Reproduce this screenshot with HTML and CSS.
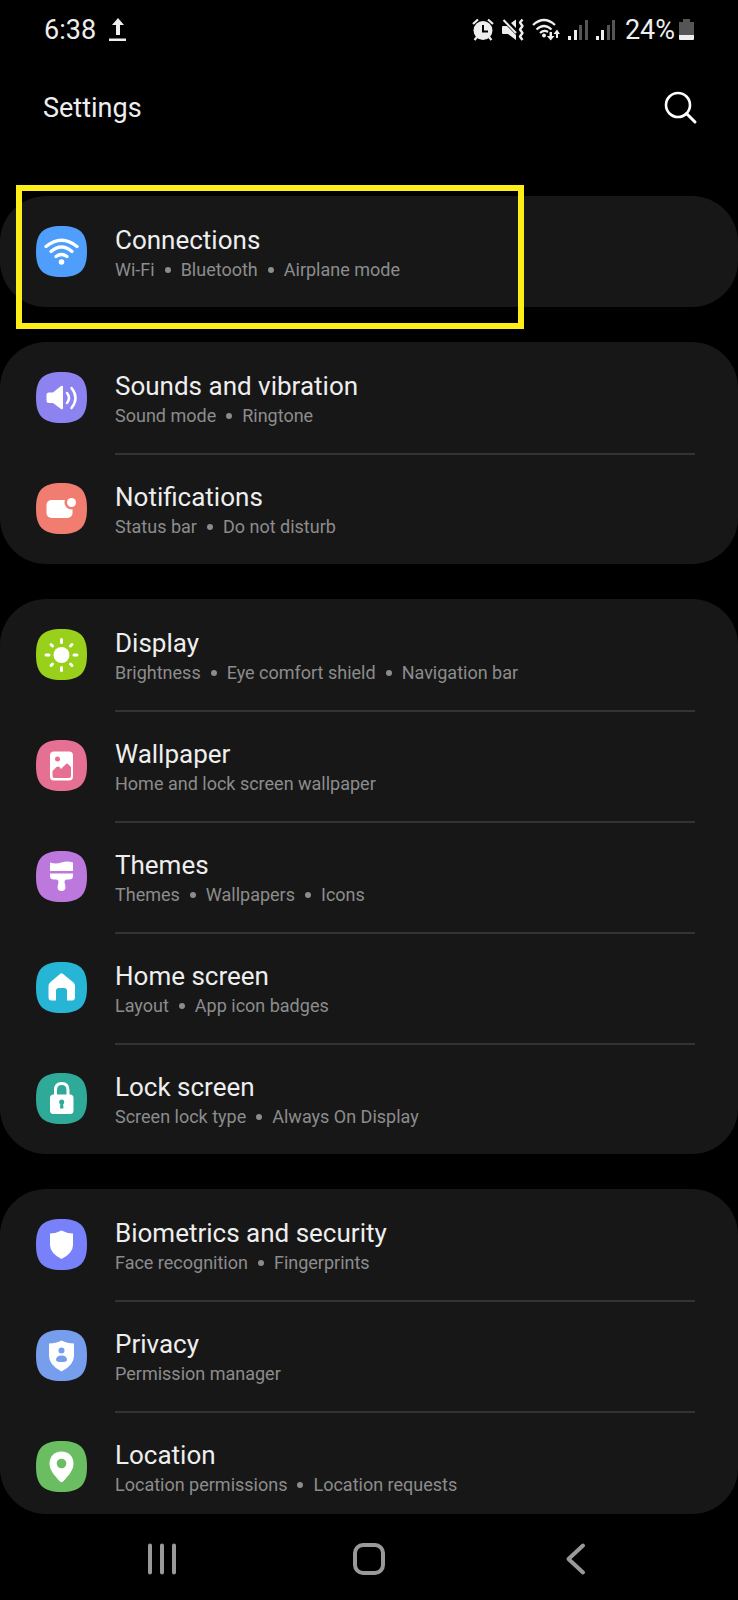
FILE: index.html
```html
<!DOCTYPE html>
<html lang="en">
<head>
    <meta charset="UTF-8">
    <meta name="viewport" content="width=device-width, initial-scale=1.0">
    <title>Settings</title>
    <link rel="stylesheet" href="styles.css">
</head>
<body>
    <div class="status-bar">
        <span class="clock">6:38</span>
        <svg class="upload" width="18" height="24" viewBox="0 0 18 24"><path d="M9 0L15 7H11V17H7V7H3Z"/><path d="M0 20.500H17V23H0Z"/></svg>
        <div class="status-icons">
            <svg width="22" height="24" viewBox="0 0 22 24">
                <path d="M1 6L6 1.500M21 6L16 1.500M5 19L2.500 22M17 19L19.500 22" fill="none" stroke="#eee" stroke-width="2.200"/>
                <circle cx="11" cy="12.500" r="9.500"/>
                <path d="M11 7V13.500H16" fill="none" stroke="#000" stroke-width="2"/>
            </svg>
            <svg width="22" height="24" viewBox="0 0 22 24">
                <path d="M0 9Q0 8 1 8H5L14 17V22L6 16H1Q0 16 0 15ZM9 5L14 1.500V10Z"/>
                <path d="M1.500 2L14 15" stroke="#eee" stroke-width="2"/>
                <path d="M20.500 1.500L18 4.500L20.500 8L18 11.500L20.500 15L18 18.500L20.500 22" fill="none" stroke="#eee" stroke-width="2.400" stroke-linejoin="round"/>
            </svg>
            <svg width="28" height="24" viewBox="0 0 28 24">
                <path d="M1 7Q12 -3 23 7M4.500 11.500Q12 4.500 19.500 11.500M8 15Q12 11.500 16 14" fill="none" stroke="#eee" stroke-width="2.200"/>
                <circle cx="12" cy="17.500" r="2"/>
                <path d="M17.500 14H20V18H22.500L18.700 22.500L15 18H17.500ZM24 20V16H21.500L25 11.500L28 16H26V20Z"/>
            </svg>
            <svg width="20" height="24" viewBox="0 0 20 24"><path d="M0 18H3V22H0ZM6 12H9V22H6Z"/><path class="dim" d="M11 7H14V22H11ZM17 2H20V22H17Z"/></svg>
            <svg width="20" height="24" viewBox="0 0 20 24"><path d="M0 18H3V22H0ZM5 12H8V22H5Z"/><path class="dim" d="M11 7H14V22H11ZM16 2H19V22H16Z"/></svg>
        </div>
        <span class="battery-level">24%</span>
        <svg class="battery" width="15" height="24" viewBox="0 0 15 24"><path class="dim" d="M4 1H11V4H15V17H0V4H4Z"/><path d="M0 17H15V21Q15 22 14 22H1Q0 22 0 21Z"/></svg>
    </div>

    <header class="header">
        <h1>Settings</h1>
        <button class="search" aria-label="Search">
            <svg width="34" height="34" viewBox="0 0 34 34"><circle cx="14" cy="14" r="12" fill="none" stroke="#fff" stroke-width="2.600"/><path d="M22.500 22.500L31 31" stroke="#fff" stroke-width="3" stroke-linecap="round"/></svg>
        </button>
    </header>

    <!-- outline shared by every icon tile -->
    <svg width="0" height="0" class="defs"><defs><path id="tile" d="M25.500 0C44 0 51 7 51 25.500S44 51 25.500 51 0 44 0 25.500 7 0 25.500 0Z"/></defs></svg>

    <main>
        <section class="card">
            <a class="row" href="#">
                <svg class="icon blue" viewBox="0 0 51 51"><use href="#tile"/><path class="line" d="M10 20.500Q25.500 8 41 20.500M15 25.500Q25.500 16.500 36 25.500M20 30.500Q25.500 26.500 31 30.500" stroke-width="3.200"/><circle class="w" cx="25.500" cy="36" r="2.800"/></svg>
                <span class="text"><span class="name">Connections</span><span class="sub">Wi-Fi<i></i>Bluetooth<i></i>Airplane mode</span></span>
            </a>
            <div class="highlight"></div>
        </section>

        <section class="card">
            <a class="row" href="#">
                <svg class="icon violet" viewBox="0 0 51 51"><use href="#tile"/><path class="w" d="M10.500 23Q10.500 20.500 13 20.500H17L25 14Q27 13 27 15V36Q27 38 25 37L17 31H13Q10.500 31 10.500 28.500Z"/><path class="line" d="M31 21Q35 26 31 31M35.500 16Q43.500 26 35.500 36" stroke-width="2.500"/></svg>
                <span class="text"><span class="name">Sounds and vibration</span><span class="sub">Sound mode<i></i>Ringtone</span></span>
            </a>
            <a class="row" href="#">
                <svg class="icon coral" viewBox="0 0 51 51"><use href="#tile"/><rect class="w" x="10.500" y="17" width="26" height="18" rx="5"/><circle cx="35.500" cy="19.500" r="7"/><circle class="w" cx="35.500" cy="19.500" r="4.500"/></svg>
                <span class="text"><span class="name">Notifications</span><span class="sub">Status bar<i></i>Do not disturb</span></span>
            </a>
        </section>

        <section class="card">
            <a class="row" href="#">
                <svg class="icon lime" viewBox="0 0 51 51"><use href="#tile"/><circle class="w" cx="25.500" cy="26" r="8"/><path class="line" d="M25.500 10.500V13.500M25.500 38.500V41.500M10 26H13M38 26H41M15 15.500L16.500 17M34.500 35L36 36.500M15 36.500L16.500 35M34.500 17L36 15.500" stroke-width="3"/></svg>
                <span class="text"><span class="name">Display</span><span class="sub">Brightness<i></i>Eye comfort shield<i></i>Navigation bar</span></span>
            </a>
            <a class="row" href="#">
                <svg class="icon pink" viewBox="0 0 51 51"><use href="#tile"/><rect class="w" x="14" y="11.500" width="23" height="29" rx="4"/><circle cx="21.500" cy="19" r="2.500"/><path d="M16.500 31L20.500 27Q22 26 23.500 27L25 29L30 24Q31 23 32 24L35 27V36Q35 38 33 38H18.500Q16.500 38 16.500 36Z"/></svg>
                <span class="text"><span class="name">Wallpaper</span><span class="sub">Home and lock screen wallpaper</span></span>
            </a>
            <a class="row" href="#">
                <svg class="icon purple" viewBox="0 0 51 51"><use href="#tile"/><path class="w" d="M14 11.500Q20 13.500 25.500 11.500T37 11.500V20H14ZM14 22.500H37V25Q37 28.500 33 28.500H31Q28.500 28.500 28.500 31L29.500 36Q29.500 40 25.500 40T21.500 36L22.500 31Q22.500 28.500 20 28.500H18Q14 28.500 14 25Z"/></svg>
                <span class="text"><span class="name">Themes</span><span class="sub">Themes<i></i>Wallpapers<i></i>Icons</span></span>
            </a>
            <a class="row" href="#">
                <svg class="icon cyan" viewBox="0 0 51 51"><use href="#tile"/><path class="w" d="M24 12Q25.500 10.500 27 12L37.500 20.500Q39 22 39 24V35Q39 38.500 36 38.500H31V29Q31 26 28 26H23Q20 26 20 29V38.500H15.500Q12.500 38.500 12.500 35V24Q12.500 22 14 20.500Z"/></svg>
                <span class="text"><span class="name">Home screen</span><span class="sub">Layout<i></i>App icon badges</span></span>
            </a>
            <a class="row" href="#">
                <svg class="icon teal" viewBox="0 0 51 51"><use href="#tile"/><rect class="w" x="14" y="21.500" width="23.500" height="19.500" rx="3.500"/><path class="line" d="M19.500 23V17Q19.500 10.500 25.700 10.500T32 17V23" stroke-width="3"/><circle cx="25.700" cy="29" r="2.500"/><path d="M24.500 29H27L27.500 35.500H24Z"/></svg>
                <span class="text"><span class="name">Lock screen</span><span class="sub">Screen lock type<i></i>Always On Display</span></span>
            </a>
        </section>

        <section class="card last">
            <a class="row" href="#">
                <svg class="icon indigo" viewBox="0 0 51 51"><use href="#tile"/><path class="w" d="M25.500 11.500Q31 14.500 37 14.500V26Q37 34 25.500 40Q14 34 14 26V14.500Q20 14.500 25.500 11.500Z"/></svg>
                <span class="text"><span class="name">Biometrics and security</span><span class="sub">Face recognition<i></i>Fingerprints</span></span>
            </a>
            <a class="row" href="#">
                <svg class="icon sky" viewBox="0 0 51 51"><use href="#tile"/><path class="w" d="M25.500 10.500Q31 13.500 38 13.500V26Q38 35 25.500 41.500Q13 35 13 26V13.500Q20 13.500 25.500 10.500Z"/><circle cx="25.500" cy="20.500" r="3"/><path d="M20 30Q20 25.500 25.500 25.500T31 30Q31 32 25.500 32T20 30Z"/></svg>
                <span class="text"><span class="name">Privacy</span><span class="sub">Permission manager</span></span>
            </a>
            <a class="row" href="#">
                <svg class="icon green" viewBox="0 0 51 51"><use href="#tile"/><path class="w" d="M25.500 10.500C33 10.500 37.500 16 37.500 22.500C37.500 29 33 34 27 40.500Q25.500 42 24 40.500C18 34 13.500 29 13.500 22.500C13.500 16 18 10.500 25.500 10.500Z"/><circle cx="25.500" cy="22.500" r="4.800"/></svg>
                <span class="text"><span class="name">Location</span><span class="sub">Location permissions<i></i>Location requests</span></span>
            </a>
        </section>
    </main>

    <nav class="nav-bar">
        <button aria-label="Recents"><svg width="32" height="34" viewBox="0 0 32 34"><path d="M4 3.500V30.500M16 3.500V30.500M28 3.500V30.500"/></svg></button>
        <button aria-label="Home"><svg width="34" height="34" viewBox="0 0 34 34"><rect x="3" y="3" width="28" height="28" rx="8"/></svg></button>
        <button aria-label="Back"><svg width="34" height="34" viewBox="0 0 34 34"><path d="M24 3.500L9.500 17L24 30.500"/></svg></button>
    </nav>
</body>
</html>
```
FILE: styles.css
```css
* {
    box-sizing: border-box;
}
body {
    margin: 0;
    background-color: #000;
    color: #eee;
    font-family: Roboto, "Noto Sans", sans-serif;
}
button {
    padding: 0;
    border: 0;
    background: none;
}
svg {
    display: block;
    flex-shrink: 0;
}
.defs {
    position: absolute;
}
.status-bar {
    display: flex;
    align-items: center;
    height: 60px;
    padding: 0 44px;
    font-size: 27px;
    fill: #eee;
}
.upload {
    margin-left: 13px;
}
.status-icons {
    display: flex;
    gap: 8px;
    margin-left: auto;
    margin-right: 9px;
}
.dim {
    fill: #555;
}
.battery {
    margin-left: 4px;
}
.header {
    display: flex;
    justify-content: space-between;
    align-items: center;
    height: 96px;
    margin-bottom: 40px;
    padding: 0 40px 0 43px;
}
h1 {
    margin: 0;
    font-size: 27px;
    font-weight: 400;
}
main {
    display: flex;
    flex-direction: column;
    gap: 35px;
}
.card {
    position: relative;
    border-radius: 46px;
    background-color: #171717;
}
.row {
    display: flex;
    height: 111px;
    padding: 0 43px 0 36px;
    color: #eee;
    text-decoration: none;
}
.last .row:last-child {
    height: 103px;
}
.icon {
    width: 51px;
    height: 51px;
    margin: 30px 28px 0 0;
}
.text {
    flex: 1;
    padding-top: 27px;
    border-top: 2px solid transparent;
}
.row + .row .text {
    border-top-color: #333;
}
.name {
    display: block;
    font-size: 26px;
    line-height: 30px;
}
.sub {
    display: flex;
    align-items: center;
    font-size: 18px;
    line-height: 30px;
    color: #8c8c8c;
}
.sub i {
    width: 6px;
    height: 6px;
    margin: 0 10px;
    border-radius: 50%;
    background-color: #8c8c8c;
}
.highlight {
    position: absolute;
    top: -11px;
    left: 16px;
    width: 508px;
    height: 144px;
    border: 6px solid #fdee17;
    pointer-events: none;
}
.blue { fill: #4f9efc; }
.violet { fill: #8c82f0; }
.coral { fill: #f17d70; }
.lime { fill: #98d01c; }
.pink { fill: #e66f94; }
.purple { fill: #bd78de; }
.cyan { fill: #27b5d5; }
.teal { fill: #2faa98; }
.indigo { fill: #7880fa; }
.sky { fill: #769eec; }
.green { fill: #6abd60; }
.w {
    fill: #fff;
}
.line {
    fill: none;
    stroke: #fff;
    stroke-linecap: round;
}
.nav-bar {
    display: grid;
    grid-template-columns: repeat(3, 1fr);
    height: 86px;
    padding: 4px 8% 0;
}
.nav-bar button {
    display: flex;
    justify-content: center;
    align-items: center;
}
.nav-bar svg {
    fill: none;
    stroke: #999;
    stroke-width: 4;
    stroke-linecap: round;
    stroke-linejoin: round;
}
```
